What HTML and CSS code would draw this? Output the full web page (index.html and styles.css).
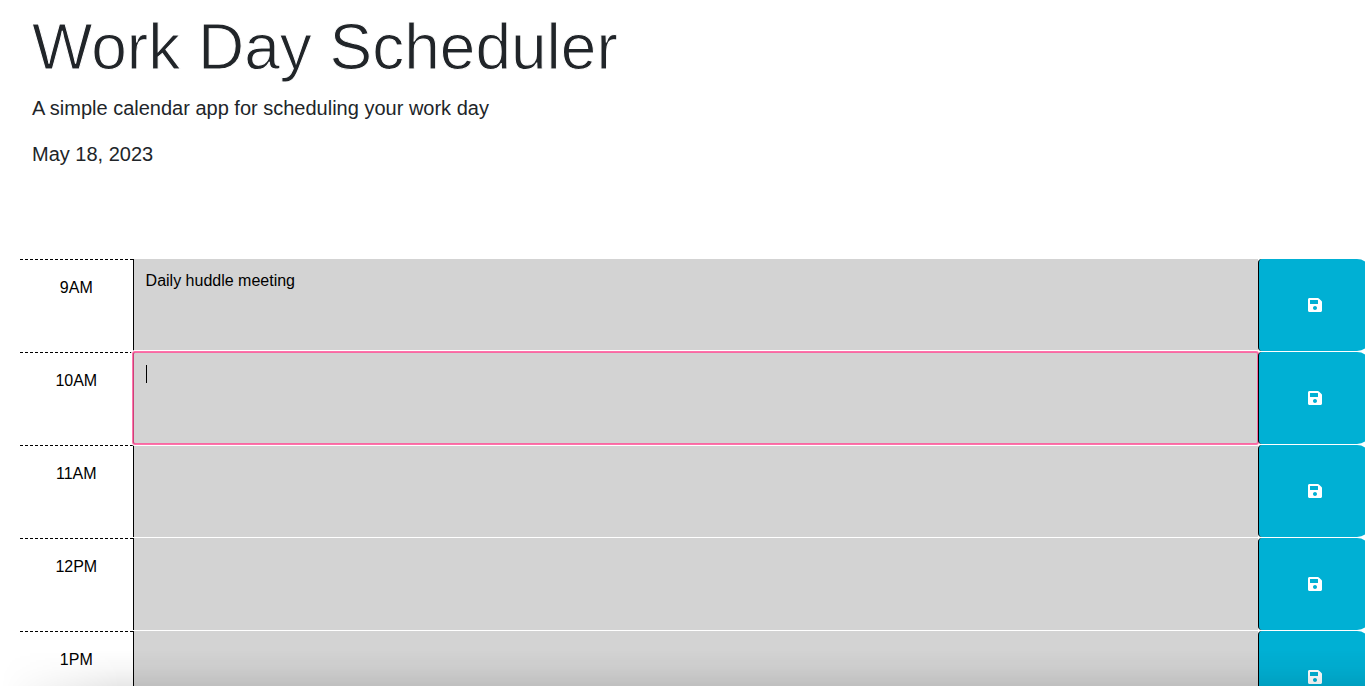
FILE: index.html
```html
<!DOCTYPE html>
<html lang="en">
<head>
<meta charset="utf-8">
<meta name="viewport" content="width=device-width, initial-scale=1">
<title>Work Day Scheduler</title>
<link rel="stylesheet" href="styles.css">
</head>
<body>
<svg class="sprite" aria-hidden="true">
  <symbol id="save" viewBox="0 0 448 512">
    <path fill="currentColor" d="M433.9 129.9l-83.9-83.9A48 48 0 0 0 316.1 32H48C21.5 32 0 53.5 0 80v352c0 26.500 21.500 48 48 48h352c26.500 0 48-21.500 48-48V163.900a48 48 0 0 0-14.100-34zM224 416c-35.300 0-64-28.700-64-64s28.700-64 64-64 64 28.700 64 64-28.700 64-64 64zm96-304.500V212c0 6.600-5.400 12-12 12H76c-6.600 0-12-5.400-12-12V108c0-6.600 5.400-12 12-12h228.500c3.200 0 6.200 1.300 8.500 3.500l3.500 3.500a12 12 0 0 1 3.500 8.500z"/>
  </symbol>
</svg>
<header class="intro">
  <h1 class="title">Work Day Scheduler</h1>
  <p class="lead">A simple calendar app for scheduling your work day</p>
  <p class="lead">May 18, 2023</p>
</header>
<main class="schedule">
  <div class="time-block">
    <label class="hour" for="hour-9">9AM</label>
    <div class="entry"><textarea class="description" id="hour-9">Daily huddle meeting</textarea></div>
    <button class="save" type="button" aria-label="Save 9AM"><svg class="icon"><use href="#save"/></svg></button>
  </div>
  <div class="time-block">
    <label class="hour" for="hour-10">10AM</label>
    <div class="entry"><textarea class="description active" id="hour-10"></textarea><span class="caret"></span></div>
    <button class="save" type="button" aria-label="Save 10AM"><svg class="icon"><use href="#save"/></svg></button>
  </div>
  <div class="time-block">
    <label class="hour" for="hour-11">11AM</label>
    <div class="entry"><textarea class="description" id="hour-11"></textarea></div>
    <button class="save" type="button" aria-label="Save 11AM"><svg class="icon"><use href="#save"/></svg></button>
  </div>
  <div class="time-block">
    <label class="hour" for="hour-12">12PM</label>
    <div class="entry"><textarea class="description" id="hour-12"></textarea></div>
    <button class="save" type="button" aria-label="Save 12PM"><svg class="icon"><use href="#save"/></svg></button>
  </div>
  <div class="time-block">
    <label class="hour" for="hour-13">1PM</label>
    <div class="entry"><textarea class="description" id="hour-13"></textarea></div>
    <button class="save" type="button" aria-label="Save 1PM"><svg class="icon"><use href="#save"/></svg></button>
  </div>
</main>
<div class="bottom-shade"></div>
</body>
</html>
```
FILE: styles.css
```css
* { box-sizing: border-box; }

body {
  height: 100vh;
  margin: 0;
  overflow: hidden;
  background: #fff;
  color: #212529;
  font: 16px/24px "Helvetica Neue", "Liberation Sans", Arial, sans-serif;
}

.sprite { position: absolute; width: 0; height: 0; }

.intro { padding: 8px 32px 74px; }

.title {
  margin: 0 0 6px;
  font-size: 64px;
  font-weight: 300;
  line-height: 79px;
  -webkit-text-stroke: 1px #fff;
}

.lead {
  margin: 0 0 16px;
  font-size: 20px;
  font-weight: 300;
  line-height: 30px;
}

.schedule { margin: 0 -6px 0 20px; }

.time-block {
  display: grid;
  grid-template-columns: 1fr 10fr 1fr;
  height: 92px;
  margin-bottom: 1px;
  color: #000;
}

.hour {
  padding-top: 16px;
  border-top: 1px dashed #000;
  text-align: center;
}

.entry { position: relative; display: flex; }

.description {
  flex: 1;
  display: block;
  padding: 10px 12px;
  border: 0;
  border-left: 1px solid #000;
  border-radius: 0;
  outline: none;
  resize: none;
  overflow: hidden;
  background: #d3d3d3;
  color: #000;
  font: inherit;
}

.description.active,
.description:focus {
  z-index: 1;
  outline: 2px solid rgba(255, 80, 150, .8);
  outline-offset: -1px;
  box-shadow: 0 0 0 2px #fff;
  border-radius: 2px;
}

.caret {
  position: absolute;
  z-index: 2;
  top: 13px;
  left: 13px;
  width: 1px;
  height: 18px;
  background: #000;
}

.save {
  position: relative;
  z-index: 2;
  display: flex;
  align-items: center;
  justify-content: center;
  padding: 0;
  border: 0;
  border-left: 1px solid #000;
  border-radius: 4px 14px 14px 4px;
  background: #00b0d4;
  color: #fff;
}

.icon { width: 14px; height: 16px; }

.bottom-shade {
  position: fixed;
  z-index: 3;
  right: 0;
  bottom: 0;
  left: 0;
  height: 36px;
  pointer-events: none;
  background: linear-gradient(to bottom, transparent, rgba(0, 0, 0, .03) 50%, rgba(0, 0, 0, .09));
  mask-image: linear-gradient(to right, transparent, #000 120px);
}
```
